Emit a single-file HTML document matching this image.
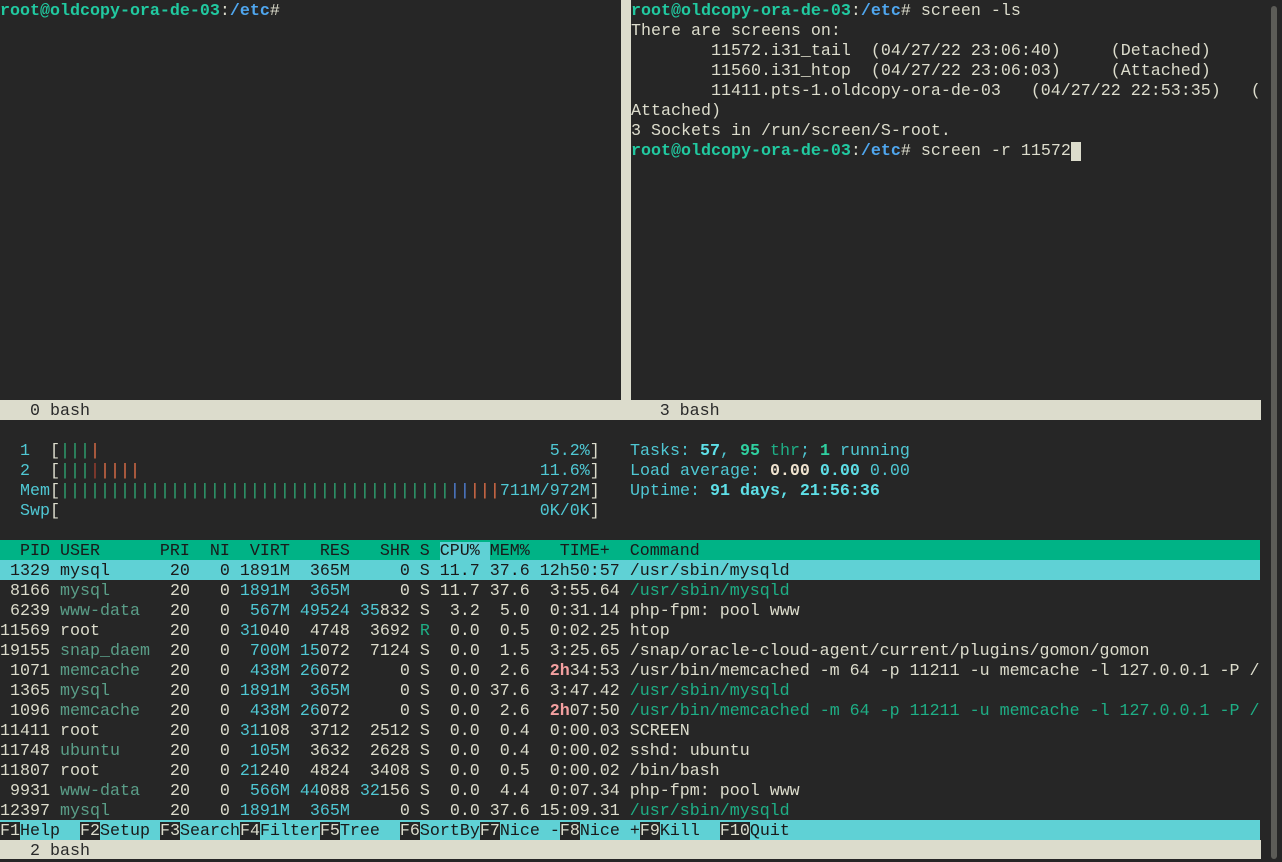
<!DOCTYPE html>
<html><head><meta charset="utf-8"><style>
html,body{margin:0;padding:0;background:#262626;width:1282px;height:859px;overflow:hidden}
.r{position:absolute;left:0;height:20px;box-sizing:border-box;padding-top:2px;line-height:20px;white-space:pre;font-family:"Liberation Mono","DejaVu Sans Mono",monospace;font-size:16.67px;color:#dcdccc}
.p{color:#21c9a0;font-weight:bold}.b{color:#4fa6ee;font-weight:bold}
.c{color:#4fc8d4}.cb{color:#5ee0e8;font-weight:bold}.d{color:#5a9e88}.g{color:#1eae85}
.mg{color:#2ea672}.mr{color:#e07048}.mx{color:#a04030}.mb{color:#5080d8}
.wb{color:#f0e4d0;font-weight:bold}.pk{color:#f4a0a0;font-weight:bold}
.sb{background:#dcdccc;color:#2a2a2a;width:1261px}
.hd{background:#00b386;color:#1a1a1a;width:1260px}
.sel{background:#5fd1d5;color:#1a1a1a;width:1260px}
.k{background:#262626;color:#dcdccc}.l{background:#5fd1d5;color:#1a1a1a}
</style></head><body>
<div style="position:absolute;left:621px;top:0;width:10px;height:400px;background:#dcdccc"></div>
<div style="position:absolute;left:1271px;top:6px;width:6px;height:853px;background:#5c5c57;border-radius:3px"></div>

<div class="r" style="top:0"><span class="p">root@oldcopy-ora-de-03</span>:<span class="b">/etc</span>#</div>

<div class="r" style="top:0;left:631px"><span class="p">root@oldcopy-ora-de-03</span>:<span class="b">/etc</span># screen -ls</div>
<div class="r" style="top:20px;left:631px">There are screens on:</div>
<div class="r" style="top:40px;left:631px">        11572.i31_tail  (04/27/22 23:06:40)     (Detached)</div>
<div class="r" style="top:60px;left:631px">        11560.i31_htop  (04/27/22 23:06:03)     (Attached)</div>
<div class="r" style="top:80px;left:631px">        11411.pts-1.oldcopy-ora-de-03   (04/27/22 22:53:35)   (</div>
<div class="r" style="top:100px;left:631px">Attached)</div>
<div class="r" style="top:120px;left:631px">3 Sockets in /run/screen/S-root.</div>
<div class="r" style="top:140px;left:631px"><span class="p">root@oldcopy-ora-de-03</span>:<span class="b">/etc</span># screen -r 11572<span style="background:#dcdccc"> </span></div>

<div class="r sb" style="top:400px">   0 bash                                                         3 bash</div>

<div class="r" style="top:440px">  <span class="c">1</span>  [<span class="mg">|||</span><span class="mr">|</span>                                             <span class="c">5.2%</span>]</div>
<div class="r" style="top:460px">  <span class="c">2</span>  [<span class="mg">|||</span><span class="mx">|</span><span class="mr">||||</span>                                        <span class="c">11.6%</span>]</div>
<div class="r" style="top:480px">  <span class="c">Mem</span>[<span class="mg">|||||||||||||||||||||||||||||||||||||||</span><span class="mb">||</span><span class="mr">|||</span><span class="c">711M/972M</span>]</div>
<div class="r" style="top:500px">  <span class="c">Swp</span>[                                                <span class="c">0K/0K</span>]</div>

<div class="r" style="top:440px;left:630px"><span class="c">Tasks: </span><span class="cb">57</span><span class="c">, </span><span class="cb" style="color:#2fd0a0">95</span><span class="g"> thr</span><span class="c">; </span><span class="cb" style="color:#2fd0a0">1</span><span class="c"> running</span></div>
<div class="r" style="top:460px;left:630px"><span class="c">Load average: </span><span class="wb">0.00</span> <span class="cb">0.00</span> <span class="c">0.00</span></div>
<div class="r" style="top:480px;left:630px"><span class="c">Uptime: </span><span class="cb">91 days, 21:56:36</span></div>

<div class="r hd" style="top:540px">  PID USER      PRI  NI  VIRT   RES   SHR S <span style="background:#5fd1d5">CPU% </span>MEM%   TIME+  Command</div>
<div class="r sel" style="top:560px"> 1329 mysql      20   0 1891M  365M     0 S 11.7 37.6 12h50:57 /usr/sbin/mysqld</div>
<div class="r" style="top:580px"> 8166 <span class="d">mysql    </span>  20   0 <span class="c">1891M  365M</span>     0 S 11.7 37.6  3:55.64 <span class="g">/usr/sbin/mysqld</span></div>
<div class="r" style="top:600px"> 6239 <span class="d">www-data </span>  20   0  <span class="c">567M 49524 35</span>832 S  3.2  5.0  0:31.14 php-fpm: pool www</div>
<div class="r" style="top:620px">11569 root       20   0 <span class="c">31</span>040  4748  3692 <span class="g">R</span>  0.0  0.5  0:02.25 htop</div>
<div class="r" style="top:640px">19155 <span class="d">snap_daem</span>  20   0  <span class="c">700M 15</span>072  7124 S  0.0  1.5  3:25.65 /snap/oracle-cloud-agent/current/plugins/gomon/gomon</div>
<div class="r" style="top:660px"> 1071 <span class="d">memcache </span>  20   0  <span class="c">438M 26</span>072     0 S  0.0  2.6  <span class="pk">2h</span>34:53 /usr/bin/memcached -m 64 -p 11211 -u memcache -l 127.0.0.1 -P /</div>
<div class="r" style="top:680px"> 1365 <span class="d">mysql    </span>  20   0 <span class="c">1891M  365M</span>     0 S  0.0 37.6  3:47.42 <span class="g">/usr/sbin/mysqld</span></div>
<div class="r" style="top:700px"> 1096 <span class="d">memcache </span>  20   0  <span class="c">438M 26</span>072     0 S  0.0  2.6  <span class="pk">2h</span>07:50 <span class="g">/usr/bin/memcached -m 64 -p 11211 -u memcache -l 127.0.0.1 -P /</span></div>
<div class="r" style="top:720px">11411 root       20   0 <span class="c">31</span>108  3712  2512 S  0.0  0.4  0:00.03 SCREEN</div>
<div class="r" style="top:740px">11748 <span class="d">ubuntu   </span>  20   0  <span class="c">105M</span>  3632  2628 S  0.0  0.4  0:00.02 sshd: ubuntu</div>
<div class="r" style="top:760px">11807 root       20   0 <span class="c">21</span>240  4824  3408 S  0.0  0.5  0:00.02 /bin/bash</div>
<div class="r" style="top:780px"> 9931 <span class="d">www-data </span>  20   0  <span class="c">566M 44</span>088 <span class="c">32</span>156 S  0.0  4.4  0:07.34 php-fpm: pool www</div>
<div class="r" style="top:800px">12397 <span class="d">mysql    </span>  20   0 <span class="c">1891M  365M</span>     0 S  0.0 37.6 15:09.31 <span class="g">/usr/sbin/mysqld</span></div>

<div class="r" style="top:820px;width:1260px;background:#5fd1d5"><span class="k">F1</span><span class="l">Help  </span><span class="k">F2</span><span class="l">Setup </span><span class="k">F3</span><span class="l">Search</span><span class="k">F4</span><span class="l">Filter</span><span class="k">F5</span><span class="l">Tree  </span><span class="k">F6</span><span class="l">SortBy</span><span class="k">F7</span><span class="l">Nice -</span><span class="k">F8</span><span class="l">Nice +</span><span class="k">F9</span><span class="l">Kill  </span><span class="k">F10</span><span class="l">Quit</span></div>
<div class="r sb" style="top:840px;height:19px">   2 bash</div>
</body></html>
